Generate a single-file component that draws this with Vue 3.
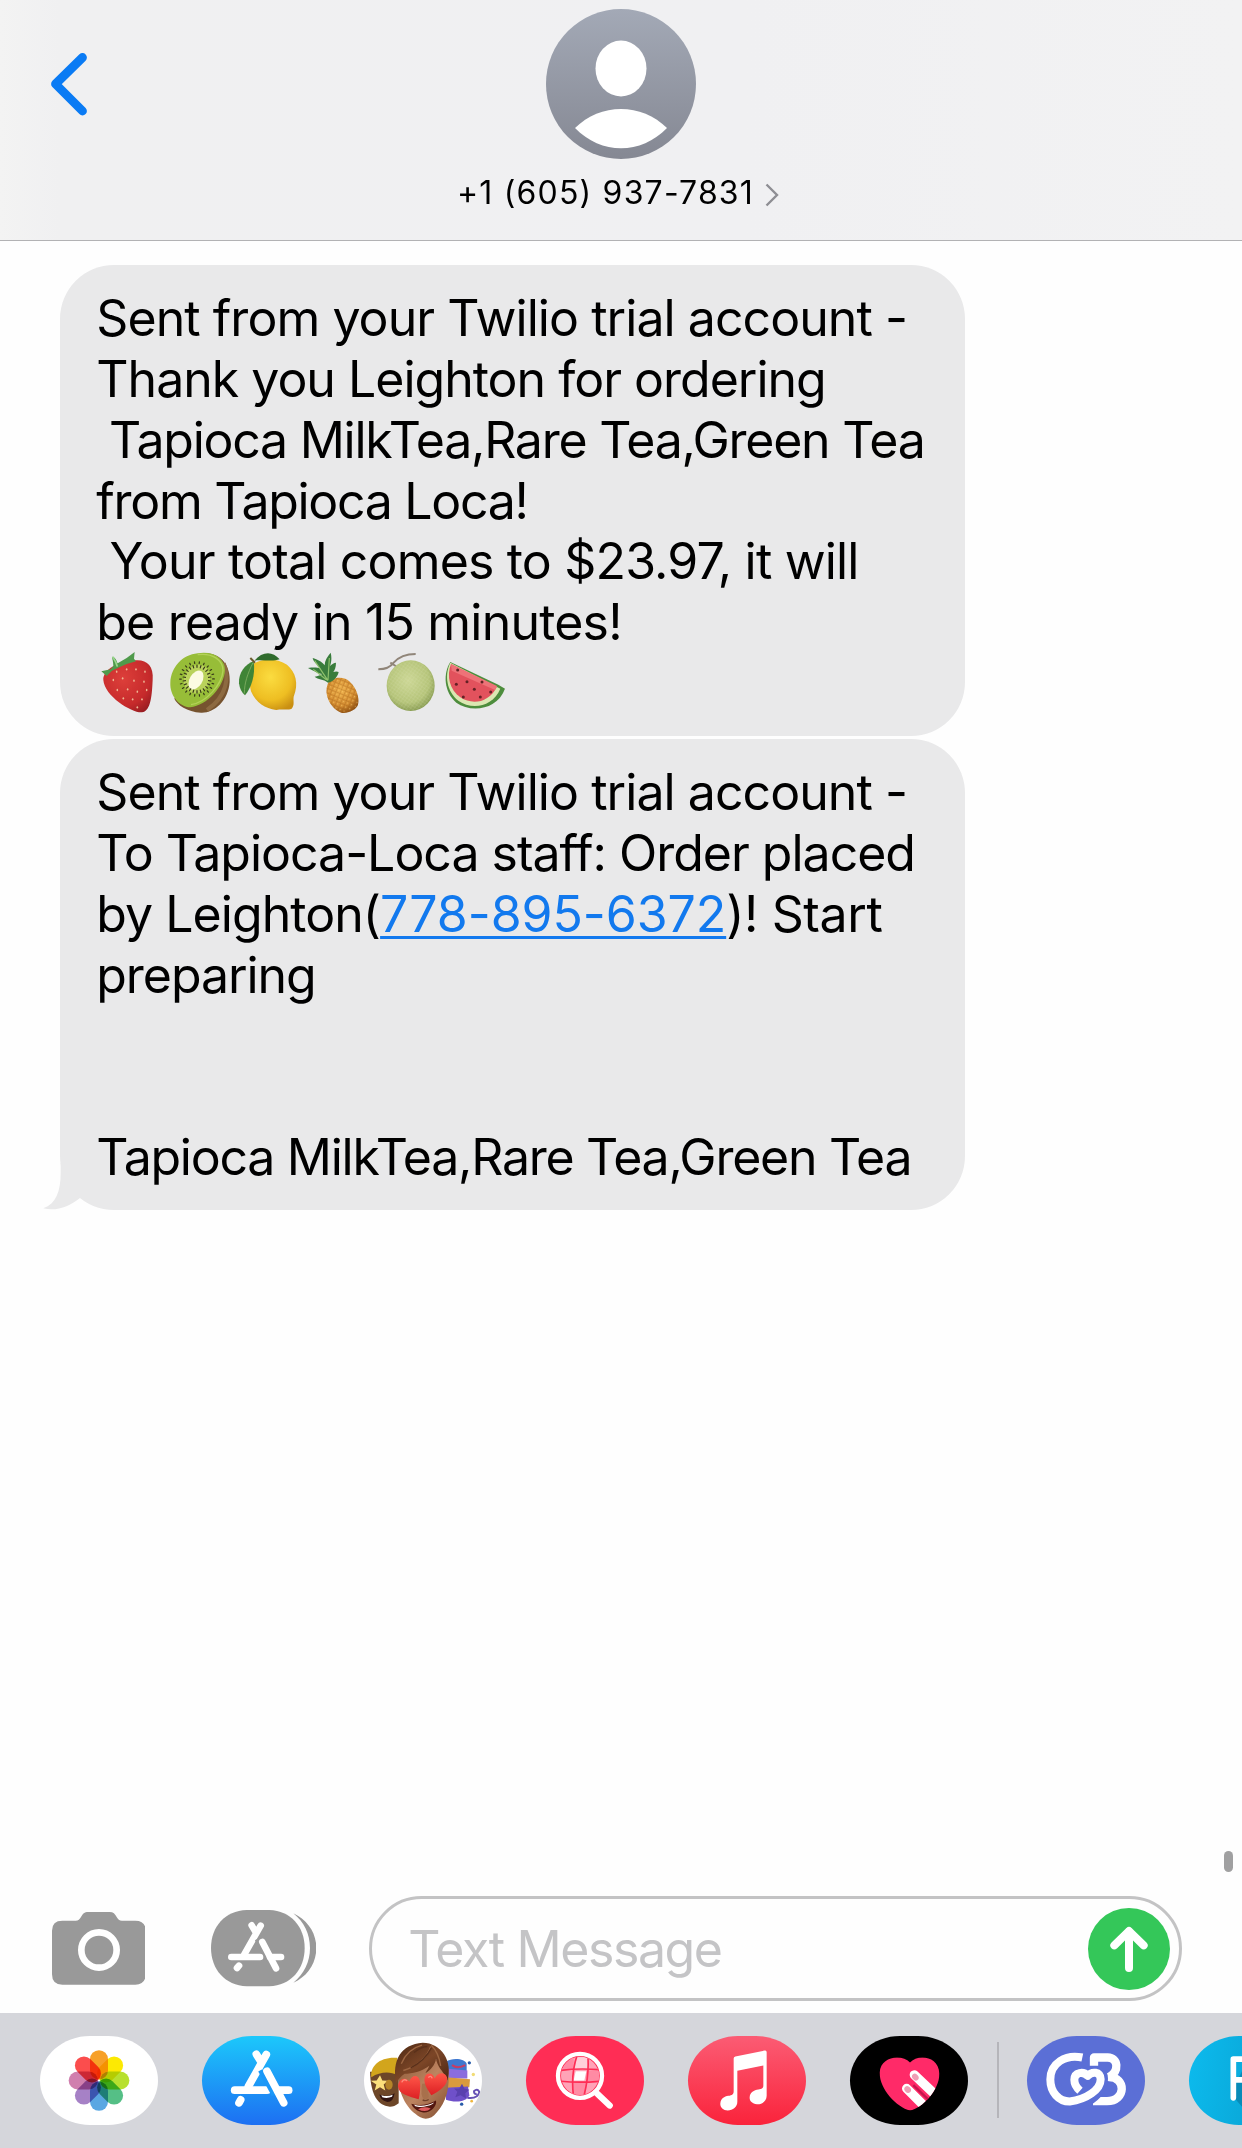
<script setup>
const orderLines = [
  { text: 'Sent from your Twilio trial account -', spacing: -0.94 },
  { text: 'Thank you Leighton for ordering', spacing: -1.0 },
  { text: ' Tapioca MilkTea,Rare Tea,Green Tea', spacing: -1.25 },
  { text: 'from Tapioca Loca!', spacing: -1.3 },
  { text: ' Your total comes to $23.97, it will', spacing: -0.82 },
  { text: 'be ready in 15 minutes!', spacing: -0.8 },
]

const petals = ['#f7a028', '#fce903', '#b7e02f', '#55bf86', '#5aa7e2', '#a681c6', '#d07fae', '#fb4d4d']

const kiwiSeeds = Array.from({ length: 22 }, (_, i) => i * 16.36)

const berrySeeds = [
  [110, 125], [140, 118], [168, 118], [195, 125], [100, 150], [128, 145], [162, 152], [192, 155],
  [112, 180], [143, 178], [172, 185], [200, 180], [130, 205], [158, 208], [186, 208], [172, 232],
]
const melonSeeds = [[1134, 120], [1162, 155], [1207, 156], [1130, 163], [1184, 178], [1233, 186], [1151, 201], [1202, 201]]
</script>

<template>
  <div class="screen">
    <header class="top">
      <svg class="back" viewBox="0 0 40 66" width="40" height="66">
        <path d="M32.500 6.500 L5.500 33 L32.500 60" fill="none" stroke="#0a7bf4" stroke-width="8.800" stroke-linecap="round" stroke-linejoin="round" />
      </svg>
      <div class="contact">
        <svg class="avatar" viewBox="0 0 150 150" width="150" height="150">
          <defs>
            <linearGradient id="avatarFill" x1="0" y1="0" x2="0" y2="1">
              <stop offset="0" stop-color="#a3a9b6" />
              <stop offset="1" stop-color="#858893" />
            </linearGradient>
          </defs>
          <circle cx="75" cy="75" r="75" fill="url(#avatarFill)" />
          <ellipse cx="75" cy="59.500" rx="25.500" ry="28" fill="#fff" />
          <path d="M29 119 C54 93.500 96 93.500 121 119 C95 146 55 146 29 119Z" fill="#fff" />
        </svg>
        <div class="number">
          <span>+1 (605) 937-7831</span>
          <svg viewBox="0 0 14 24" width="14" height="24">
            <path d="M1.500 1.500 L12 12 L1.500 22.500" fill="none" stroke="#8e8e93" stroke-width="2.400" />
          </svg>
        </div>
      </div>
    </header>

    <main class="thread">
      <div class="bubble">
        <p v-for="line in orderLines" :key="line.text" class="line" :style="{ letterSpacing: line.spacing + 'px' }">{{ line.text }}</p>
        <div class="fruits">
          <svg class="fruit" viewBox="54 69 206 183">
            <defs>
              <radialGradient id="berry" cx="0.4" cy="0.35" r="0.75">
                <stop offset="0" stop-color="#dd3f3a" />
                <stop offset="0.7" stop-color="#c62a2b" />
                <stop offset="1" stop-color="#991d22" />
              </radialGradient>
            </defs>
            <path d="M70 150 C68 118 118 92 160 92 C196 86 222 104 218 150 C216 190 214 244 186 247 C158 250 74 200 70 150Z" fill="url(#berry)" />
            <g fill="#eeb794">
              <ellipse v-for="s in berrySeeds" :key="s.join()" :cx="s[0]" :cy="s[1]" rx="2.400" ry="3.600" />
            </g>
            <path d="M64 124 L92 118 L100 108 C100 90 94 82 98 80 C106 82 110 92 113 100 L140 84 L164 66 L162 86 L168 94 L140 102 L118 112 L96 122 L80 138Z" fill="#4f9a4b" />
            <path d="M98 80 C106 92 110 100 112 110" stroke="#9ad68c" stroke-width="5" fill="none" />
          </svg>
          <svg class="fruit" viewBox="260 69 206 183">
            <path d="M360 70 C420 62 452 108 448 156 C444 214 400 250 362 248 C320 246 290 224 282 206Z" fill="#76532f" />
            <path d="M430 100 C448 140 440 200 380 240" stroke="#8d6a41" stroke-width="12" fill="none" />
            <path d="M352 70 C400 62 434 86 434 120 C432 170 380 226 330 232 C296 230 268 196 270 158 C272 112 306 74 352 70Z" fill="#97bd38" />
            <path d="M352 74 C396 68 428 90 428 122 C424 166 376 218 332 224" stroke="#b4d258" stroke-width="4" fill="none" />
            <ellipse cx="350" cy="147" rx="38" ry="44" fill="#b9d25b" transform="rotate(30 350 147)" />
            <ellipse cx="347" cy="150" rx="19" ry="31" fill="#fcfbe2" transform="rotate(30 347 150)" />
            <g stroke="#38391b" stroke-width="3.600" stroke-linecap="round">
              <line v-for="a in kiwiSeeds" :key="a" x1="350" y1="112" x2="350" y2="105" :transform="`rotate(${a} 350 147)`" />
              <line v-for="a in kiwiSeeds" :key="'o' + a" x1="350" y1="100" x2="350" y2="95" :transform="`rotate(${a + 8} 350 147)`" />
            </g>
          </svg>
          <svg class="fruit" viewBox="466 69 206 183">
            <defs>
              <radialGradient id="lemon" cx="0.45" cy="0.35" r="0.7">
                <stop offset="0" stop-color="#fbdc40" />
                <stop offset="0.65" stop-color="#eebe22" />
                <stop offset="1" stop-color="#c98f12" />
              </radialGradient>
            </defs>
            <path d="M524 100 C550 84 592 84 622 104 C648 126 658 160 642 200 C640 214 646 224 636 236 C622 242 610 236 590 240 C556 236 530 220 514 184 C506 150 506 120 524 100Z" fill="url(#lemon)" />
            <path d="M524 92 C548 64 578 62 600 88 C580 96 546 88 524 92Z" fill="#2f6b2c" />
            <path d="M522 94 C496 102 476 130 478 160 C480 176 486 188 496 196 C514 176 528 136 522 94Z" fill="#3f8436" />
            <path d="M520 98 C504 130 494 160 494 190" stroke="#76a95c" stroke-width="3" fill="none" />
            <path d="M512 84 L526 98" stroke="#6b5b2c" stroke-width="6" />
          </svg>
          <svg class="fruit" viewBox="672 69 206 183">
            <defs>
              <radialGradient id="pine" cx="0.45" cy="0.35" r="0.7">
                <stop offset="0" stop-color="#eeb04c" />
                <stop offset="0.65" stop-color="#d28a30" />
                <stop offset="1" stop-color="#87490f" />
              </radialGradient>
              <pattern id="pineGrid" width="13" height="13" patternUnits="userSpaceOnUse" patternTransform="rotate(22)">
                <path d="M0 0 H13 M0 0 V13" stroke="#9c5e14" stroke-width="2.500" />
                <circle cx="7" cy="7" r="2" fill="#ffdc78" />
              </pattern>
            </defs>
            <path d="M744 160 C752 142 792 136 810 156 C828 172 840 204 834 224 C828 240 802 252 784 248 C758 240 728 198 744 160Z" fill="url(#pine)" />
            <path d="M744 160 C752 142 792 136 810 156 C828 172 840 204 834 224 C828 240 802 252 784 248 C758 240 728 198 744 160Z" fill="url(#pineGrid)" opacity="0.6" />
            <path d="M744 158 C730 146 714 150 704 140 C714 138 722 136 726 132 C708 128 696 120 684 114 C700 112 712 112 722 116 C712 104 700 96 698 84 C712 88 728 96 734 106 C734 92 742 80 752 68 C756 82 754 98 750 108 C756 102 762 98 768 98 C768 112 764 120 760 126 C766 124 772 124 776 126 C772 144 758 156 744 158Z" fill="#397c3c" />
            <path d="M744 152 L704 92 M744 150 L748 84 M740 150 L700 118" stroke="#8fc26c" stroke-width="3.500" fill="none" />
          </svg>
          <svg class="fruit" viewBox="878 69 206 183">
            <defs>
              <radialGradient id="melon" cx="0.45" cy="0.4" r="0.62">
                <stop offset="0" stop-color="#ccd795" />
                <stop offset="0.7" stop-color="#b5c479" />
                <stop offset="1" stop-color="#869a50" />
              </radialGradient>
              <pattern id="melonNet" width="9" height="9" patternUnits="userSpaceOnUse" patternTransform="rotate(35)">
                <path d="M0 0 H9 M0 0 V9" stroke="#e3e9c2" stroke-width="1.200" />
              </pattern>
            </defs>
            <ellipse cx="991" cy="167" rx="72" ry="76" fill="url(#melon)" />
            <ellipse cx="991" cy="167" rx="70" ry="74" fill="url(#melonNet)" opacity="0.6" />
            <path d="M894 118 C916 118 930 112 940 98 C954 82 976 72 1006 72 M930 98 L946 108" stroke="#908579" stroke-width="6" fill="none" />
          </svg>
          <svg class="fruit" viewBox="1084 69 206 183">
            <path d="M1112 96 C1090 130 1092 186 1130 218 C1172 248 1252 242 1276 176 L1256 164Z" fill="#4d8d3d" />
            <path d="M1112 98 C1094 134 1100 184 1136 212 C1176 240 1238 232 1262 176Z" fill="#dbe7b2" />
            <path d="M1114 102 C1100 138 1110 180 1142 202 C1178 226 1228 218 1252 170Z" fill="#e2525d" />
            <path d="M1114 102 L1252 168 L1246 180 L1116 122Z" fill="#ee7278" />
            <circle v-for="s in melonSeeds" :key="s.join()" :cx="s[0]" :cy="s[1]" r="4.500" fill="#642125" />
          </svg>
        </div>
      </div>

      <div class="bubble">
        <p class="line s1">Sent from your Twilio trial account -</p>
        <p class="line s2">To Tapioca-Loca staff: Order placed</p>
        <p class="line s3">by Leighton(<a class="link">778-895-6372</a><span class="after">)! Start</span></p>
        <p class="line s4">preparing</p>
        <p class="line"></p>
        <p class="line"></p>
        <p class="line s5">Tapioca MilkTea,Rare Tea,Green Tea</p>
        <svg class="tail" viewBox="36 1300 120 142" width="40" height="47.333">
          <path d="M92 1300 V1330 C92 1385 78 1422 40 1436 C80 1446 118 1430 151 1404 V1300Z" fill="#e9e9ea" />
        </svg>
      </div>
      <i class="scroll"></i>
    </main>

    <section class="compose">
      <svg viewBox="155 218 281 218" width="93.667" height="72.667">
        <path d="M186 244 H226 C234 244 238 240 242 233 C247 224 252 218 264 218 H328 C339 218 344 224 349 233 C353 240 357 244 365 244 H405 Q436 244 436 274 V405 Q436 436 405 436 H186 Q155 436 155 405 V274 Q155 244 186 244Z" fill="#999" />
        <circle cx="296" cy="332" r="53" fill="none" stroke="#fff" stroke-width="20" />
      </svg>
      <svg class="store" viewBox="633 212 316 229" width="105.333" height="76.333">
        <path d="M880 222 C922 242 949 280 949 326 C949 372 922 412 880 430 C912 404 930 368 930 326 C930 284 912 248 880 222Z" fill="#999" />
        <path d="M740 212 H808 C872 214 914 262 914 326 C914 390 872 439 808 441 H740 C675 438 633 390 633 326 C633 262 675 214 740 212Z" fill="#999" />
        <g fill="none" stroke="#fff" stroke-width="20" stroke-linecap="round">
          <path d="M782 259 L733 345 M755 258 L768 280" />
          <path d="M717 379 L711 386" />
          <path d="M694 353 H780" />
        </g>
        <path d="M770 300 L808 368" stroke="#999" stroke-width="12" />
        <g fill="none" stroke="#fff" stroke-width="20" stroke-linecap="round">
          <path d="M810 353 H843" />
          <path d="M787 308 L828 387" />
        </g>
      </svg>
      <div class="field">
        <span class="hint">Text Message</span>
        <svg viewBox="924 204 246 246" width="82" height="82">
          <circle cx="1047" cy="327" r="123" fill="#34c759" />
          <path d="M1047 384 V274 M1003 316 L1047 273 L1091 316" fill="none" stroke="#fff" stroke-width="24" stroke-linecap="round" stroke-linejoin="round" />
        </svg>
      </div>
    </section>

    <nav class="dock">
      <svg class="pill photos" viewBox="120 587 354 266">
        <g class="petals">
          <rect v-for="(color, i) in petals" :key="color" x="270" y="629" width="54" height="88" rx="27" :fill="color" :transform="`rotate(${i * 45} 297 720)`" />
        </g>
      </svg>
      <svg class="pill appstore" viewBox="605 587 354 266">
        <g fill="none" stroke="#fff" stroke-width="23" stroke-linecap="round">
          <path d="M798 642 L744 738 M768 641 L782 664" />
          <path d="M721 778 L716 787" />
          <path d="M703 749 H800" />
        </g>
        <path d="M779 690 L820 764" stroke="#1b98f8" stroke-width="12" />
        <g fill="none" stroke="#fff" stroke-width="23" stroke-linecap="round">
          <path d="M832 749 H865" />
          <path d="M800 692 L850 787" />
        </g>
      </svg>
      <svg class="pill memoji" viewBox="72 587 354 266">
        <defs>
          <linearGradient id="skin" x1="0" y1="0" x2="1" y2="1">
            <stop offset="0" stop-color="#8c5837" />
            <stop offset="0.5" stop-color="#bd8460" />
            <stop offset="1" stop-color="#804c2f" />
          </linearGradient>
          <linearGradient id="hair" x1="0" y1="0" x2="1" y2="1">
            <stop offset="0" stop-color="#4c2813" />
            <stop offset="0.5" stop-color="#7c4627" />
            <stop offset="1" stop-color="#482411" />
          </linearGradient>
          <linearGradient id="heart" x1="0" y1="0" x2="0" y2="1">
            <stop offset="0" stop-color="#ff5547" />
            <stop offset="1" stop-color="#dc2024" />
          </linearGradient>
        </defs>
        <path d="M90 694 H176 V788 C162 800 148 800 136 796 C108 786 92 756 90 694Z" fill="#6d4628" />
        <path d="M94 710 C90 676 120 648 172 652 V704 C150 692 120 694 94 710Z" fill="#d2a51c" />
        <path d="M120 704 L127 720 L144 721 L131 732 L136 750 L120 740 L104 750 L109 732 L92 721 L110 720Z" fill="#fbe07c" />
        <ellipse cx="147" cy="733" rx="11" ry="15" fill="#b58428" />
        <path d="M118 762 Q142 772 164 758 Q160 786 140 784 Q122 780 118 762Z" fill="#321512" />
        <path d="M124 764 Q142 770 158 763 L156 769 Q140 775 127 770Z" fill="#fff" />
        <path d="M318 664 C336 650 376 654 380 670 V700 H318Z" fill="#3f78cf" />
        <path d="M318 684 L382 690 V714 H318Z" fill="#8a6ddd" />
        <path d="M318 710 L390 716 L388 740 L318 744Z" fill="#d99a3d" />
        <path d="M318 742 L384 738 L388 764 C380 784 346 788 318 778Z" fill="#6f50c9" />
        <path d="M366 730 L373 744 L388 748 L376 758 L378 774 L362 764 L346 770 L352 754 L342 744 L358 744Z" fill="#5940ae" />
        <path d="M382 772 Q414 776 418 754 Q412 742 402 752 Q402 762 410 760" fill="none" stroke="#6651b4" stroke-width="6" />
        <path d="M336 674 Q352 686 376 674" stroke="#c83c64" stroke-width="6" fill="none" />
        <circle cx="388" cy="667" r="5" fill="#285caa" />
        <circle cx="400" cy="702" r="5" fill="#f1dc76" />
        <circle cx="365" cy="791" r="5" fill="#285caa" />
        <circle cx="395" cy="782" r="4" fill="#efb63e" />
        <path d="M172 680 C170 650 300 640 324 680 C332 742 318 784 290 816 C272 840 246 840 226 820 C194 794 172 752 172 680Z" fill="url(#skin)" />
        <path d="M168 728 C156 660 182 612 248 607 C304 607 340 664 322 720 C316 706 308 694 300 684 C294 674 290 664 288 656 C284 674 272 688 256 698 C262 688 266 682 268 676 C244 694 216 700 194 700 C182 708 176 716 168 728Z" fill="url(#hair)" />
        <path d="M190 690 C226 680 262 652 272 618 M184 670 C196 640 216 622 246 614 M302 676 C298 648 288 628 274 614" stroke="#9c6642" stroke-width="4" fill="none" />
        <path d="M212 682 C240 668 262 646 274 622 M222 636 C240 622 252 618 262 618" stroke="#5a301a" stroke-width="4" fill="none" />
        <path d="M246 730 Q240 768 252 776 Q268 776 266 764 L262 728Z" fill="#a8704c" />
        <path d="M248 778 Q256 783 266 777" stroke="#70402a" stroke-width="4" fill="none" />
        <path d="M236 776 C208 768 176 762 174 738 C174 716 196 706 208 724 C214 702 236 700 240 722 C242 742 240 760 236 776Z" fill="url(#heart)" />
        <path d="M274 764 C258 742 248 722 256 706 C264 694 280 698 284 714 C292 696 314 692 321 710 C326 734 296 752 274 764Z" fill="url(#heart)" />
        <path d="M186 724 Q192 714 200 720 M266 710 Q272 704 276 712" stroke="#ff8a7c" stroke-width="4" fill="none" stroke-linecap="round" />
        <path d="M214 790 C240 798 268 792 288 780 C292 798 270 818 250 816 C232 814 218 802 214 790Z" fill="#54170f" />
        <path d="M222 793 C246 799 266 794 282 786 L279 790 C262 800 238 801 226 797Z" fill="#fff" />
        <path d="M234 806 Q252 796 272 804 Q258 818 234 806Z" fill="#df5b5d" />
      </svg>
      <svg class="pill search" viewBox="557 587 354 266">
        <defs>
          <clipPath id="lens"><circle cx="719" cy="706" r="57" /></clipPath>
        </defs>
        <g clip-path="url(#lens)">
          <rect x="660" y="640" width="120" height="130" fill="#ffa3b7" />
          <path d="M660 646 H700 V688 H660Z M738 690 H780 V722 H738Z M696 724 H736 V768 H696Z" fill="#ff8ba4" />
          <path d="M708 650 H744 V688 H702Z" fill="#ffd0da" />
          <path d="M706 692 H738 L732 720 H700Z" fill="#fff" />
          <g fill="none" stroke="#ff2d55" stroke-width="5">
            <path d="M660 690 Q718 682 780 688 M660 722 Q718 728 780 722" />
            <path d="M712 640 Q690 700 700 770 M742 640 Q748 700 730 770" />
          </g>
        </g>
        <circle cx="719" cy="706" r="66" fill="none" stroke="#fff" stroke-width="13" />
        <path d="M767 756 L808 795" stroke="#fff" stroke-width="19" stroke-linecap="round" />
      </svg>
      <svg class="pill music" viewBox="1043 587 354 266">
        <path d="M1180 654 Q1180 649 1185 648 L1273 630 Q1279 629 1279 635 V766 C1279 783 1264 792 1250 791 C1235 790 1227 781 1228 770 C1229 755 1241 749 1254 747 C1265 745 1269 743 1269 735 V675 L1191 691 V784 C1191 800 1178 809 1162 810 C1148 810 1139 800 1140 789 C1141 775 1152 768 1164 766 C1176 764 1180 761 1180 752Z" fill="#fff" />
      </svg>
      <svg class="pill touch" viewBox="208 587 354 266">
        <defs>
          <clipPath id="loveHeart">
            <path d="M388 666 C410 640 474 645 476 698 C478 748 424 804 388 810 C348 800 296 746 297 696 C300 646 364 640 388 666Z" />
          </clipPath>
        </defs>
        <g clip-path="url(#loveHeart)">
          <rect x="290" y="640" width="190" height="175" fill="#ff2a68" />
          <path d="M401 703 L480 778 M378 744 L440 806" stroke="#fff" stroke-width="28" stroke-linecap="round" fill="none" />
          <path d="M398 734 L448 782" stroke="#c5164d" stroke-width="7" />
        </g>
        <ellipse cx="404" cy="710" rx="9" ry="11" fill="#ef9db5" transform="rotate(-40 404 710)" />
        <ellipse cx="381" cy="747" rx="9" ry="11" fill="#ef9db5" transform="rotate(-40 381 747)" />
      </svg>
      <i class="divider"></i>
      <svg class="pill gb" viewBox="80 77 354 266">
        <g fill="none" stroke-linejoin="round">
          <path d="M281 166 V141 H322 C354 142 358 182 326 200 C378 200 378 272 320 272 H278" stroke="#fff" stroke-width="25" />
          <path d="M268 186 C286 166 314 178 314 205 C314 240 286 265 262 279" stroke="#5b6fd6" stroke-width="18" />
          <path d="M246 141 C196 130 150 158 150 207 C150 245 175 273 208 273 C258 266 301 238 301 206 C301 182 274 182 262 196 C250 182 222 184 222 208 C222 224 230 233 239 241" stroke="#fff" stroke-width="24" />
        </g>
      </svg>
      <svg class="pill paypal" viewBox="1226 587 354 266">
        <path d="M1351 760 L1386 800 V690Z" fill="#078bb8" />
        <path d="M1359 772 V656 H1400 Q1430 656 1430 686 Q1430 718 1400 718 H1359" fill="none" stroke="#fff" stroke-width="17" stroke-linecap="round" stroke-linejoin="round" />
      </svg>
    </nav>
  </div>
</template>

<style>
body {
  margin: 0;
  background: #fff;
}
</style>

<style scoped>
.screen {
  display: flex;
  flex-direction: column;
  width: 1242px;
  height: 2148px;
  overflow: hidden;
  background: #fefefe;
  color: #000;
  font-family: Inter, "Noto Sans", sans-serif;
}
.screen svg {
  display: block;
  flex: none;
}
.top {
  display: grid;
  grid-template-columns: 1fr auto 1fr;
  height: 240px;
  flex: none;
  background: linear-gradient(90deg, #f3f3f3 0, #f0f0f1 60px, #f0f0f2 60%, #f2f2f3 100%);
  border-bottom: 1px solid #b2b2b4;
}
.back {
  margin: 51px 0 0 50px;
}
.contact {
  display: flex;
  flex-direction: column;
  align-items: center;
  padding-top: 9px;
}
.number {
  display: flex;
  align-items: center;
  gap: 11px;
  margin: 14px 6px 0 0;
  height: 40px;
  font-size: 32px;
  line-height: 40px;
  letter-spacing: 1.18px;
  white-space: nowrap;
}
.number svg {
  margin-top: 3px;
}
.thread {
  position: relative;
  display: flex;
  flex-direction: column;
  gap: 3px;
  height: 1655px;
  box-sizing: border-box;
  flex: none;
  padding: 24px 0 0 60px;
}
.bubble {
  position: relative;
  box-sizing: border-box;
  width: 905px;
  height: 471px;
  flex: none;
  padding: 23px 0 0 36.300px;
  border-radius: 54px;
  background: #e9e9ea;
}
.line {
  height: 60.857px;
  margin: 0;
  font-size: 50px;
  line-height: 60.857px;
  white-space: pre;
}
.s1 { letter-spacing: -0.94px; }
.s2 { letter-spacing: -1.01px; }
.s3 { letter-spacing: -0.95px; }
.s4 { letter-spacing: -1.05px; }
.s5 { letter-spacing: -1.26px; }
.link {
  color: #1279ee;
  letter-spacing: -0.06px;
  text-decoration: underline;
  text-decoration-thickness: 3px;
  text-underline-offset: 4px;
  text-decoration-skip-ink: none;
}
.after {
  letter-spacing: -0.4px;
}
.fruits {
  display: flex;
  padding-left: 1.700px;
}
.fruit {
  width: 68.667px;
  height: 61px;
  overflow: visible;
}
.tail {
  position: absolute;
  left: -18px;
  bottom: 0;
}
.scroll {
  position: absolute;
  right: 9px;
  bottom: 24px;
  width: 9px;
  height: 21px;
  border-radius: 5px;
  background: #a0a0a1;
}
.compose {
  display: flex;
  align-items: center;
  height: 105px;
  flex: none;
  padding: 0 60px 12px 51.667px;
}
.store {
  margin-left: 65.667px;
}
.field {
  display: flex;
  align-items: center;
  justify-content: space-between;
  box-sizing: border-box;
  height: 105px;
  flex: 1;
  margin-left: 53px;
  padding: 0 9px 0 36px;
  border: 3px solid #c3c3c4;
  border-radius: 53px;
  background: #fefefe;
}
.hint {
  color: #c4c4c6;
  font-size: 50px;
  line-height: 60px;
  letter-spacing: -1.4px;
}
.dock {
  display: flex;
  align-items: flex-start;
  height: 135px;
  box-sizing: border-box;
  flex: none;
  gap: 44px;
  padding: 22.500px 0 0 40px;
  background: #d5d6db;
  overflow: hidden;
}
.pill {
  width: 118px;
  height: 89px;
  border-radius: 50px / 44.500px;
  background: #fff;
}
.petals {
  isolation: isolate;
}
.petals rect {
  mix-blend-mode: multiply;
}
.appstore { background: linear-gradient(#1cc8fb, #1d6ff2); }
.search { background: #ff2d55; }
.music { background: linear-gradient(#fb5c74, #fa233b); }
.touch { background: #000; }
.gb { background: #5b6fd6; }
.paypal { background: linear-gradient(100deg, #0cbbee, #0899c8); }
.divider {
  width: 2px;
  height: 76px;
  flex: none;
  margin: 6px -16px 0 -15px;
  background: #b5b5ba;
}
</style>
